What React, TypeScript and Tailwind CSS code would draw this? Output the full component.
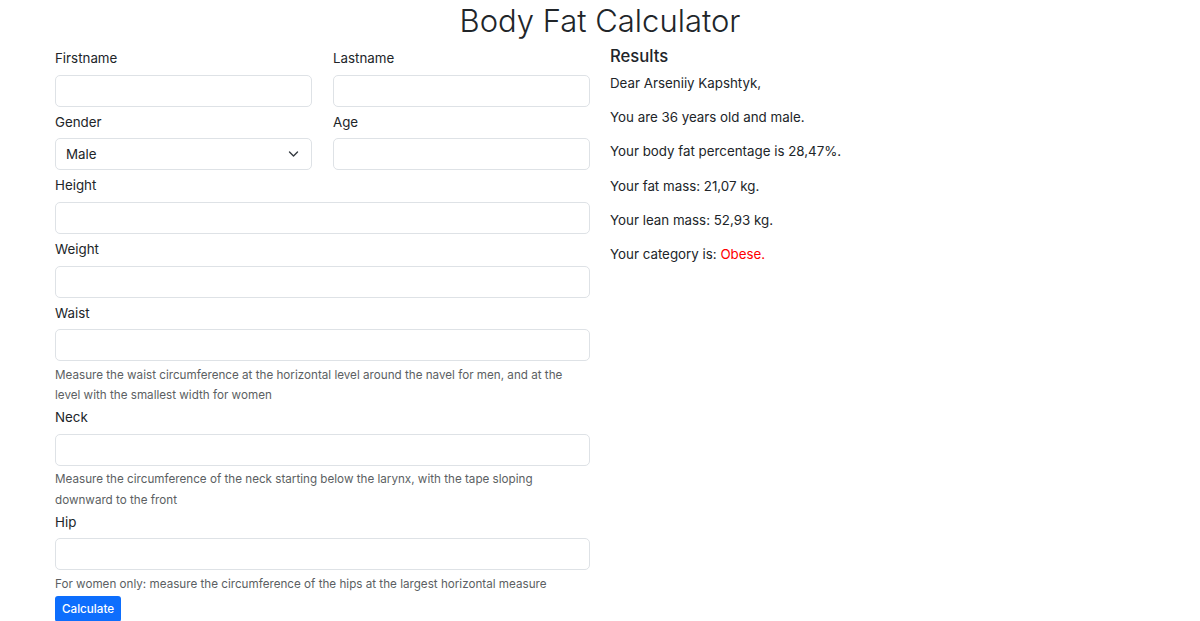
import React, { useState } from 'react';

const inputCls =
  'block w-full h-[32px] rounded-[5px] border border-[#dee2e6] bg-white px-[10px] text-[13.33px] text-[#212529] outline-none';

const Field: React.FC<{ label: string; help?: string; last?: boolean; children?: React.ReactNode }> = ({
  label,
  help,
  last,
  children,
}) => (
  <div className={last ? 'mb-[2px]' : help ? 'mb-[1.5px]' : 'mb-[5px]'}>
    <label className="block mb-[6.67px] leading-[20px]">{label}</label>
    {children ?? <input type="text" className={inputCls} />}
    {help && <div className="mt-[3.33px] text-[11.67px] leading-[20.5px] text-[#5c5f63]">{help}</div>}
  </div>
);

const App: React.FC = () => {
  const [gender, setGender] = useState('Male');

  return (
    <div className="min-h-screen w-full bg-white text-[#212529] text-[13.33px] leading-[20px] font-['Inter','Liberation_Sans',sans-serif]">
      <h1 className="text-center text-[31px] font-light leading-[42px] h-[42px]">Body Fat Calculator</h1>

      <div className="w-[1090px] mx-auto mt-[3px] grid grid-cols-2 gap-[20px]">
        <form className="pt-[3px]" onSubmit={(e) => e.preventDefault()}>
          <div className="grid grid-cols-2 gap-x-[21px]">
            <Field label="Firstname" />
            <Field label="Lastname" />
            <Field label="Gender">
              <div className="relative">
                <select
                  value={gender}
                  onChange={(e) => setGender(e.target.value)}
                  className={inputCls + ' appearance-none pr-[30px]'}
                >
                  <option>Male</option>
                  <option>Female</option>
                </select>
                <svg
                  className="absolute right-[13px] top-[12px] pointer-events-none"
                  width="11"
                  height="8"
                  viewBox="0 0 11 8"
                  fill="none"
                >
                  <path d="M1.5 2l4 4 4-4" stroke="#343a40" strokeWidth="1.4" strokeLinecap="round" strokeLinejoin="round" />
                </svg>
              </div>
            </Field>
            <Field label="Age" />
          </div>
          <Field label="Height" />
          <Field label="Weight" />
          <Field
            label="Waist"
            help="Measure the waist circumference at the horizontal level around the navel for men, and at the level with the smallest width for women"
          />
          <Field
            label="Neck"
            help="Measure the circumference of the neck starting below the larynx, with the tape sloping downward to the front"
          />
          <Field
            label="Hip"
            last
            help="For women only: measure the circumference of the hips at the largest horizontal measure"
          />
          <button
            type="submit"
            className="h-[26px] px-[7px] rounded-[3px] bg-[#0d6efd] text-white text-[11.67px] font-medium leading-[17px]"
          >
            Calculate
          </button>
        </form>

        <div>
          <h5 className="text-[16.67px] font-medium leading-[20px] mt-[1px] mb-[7px]">Results</h5>
          <p className="mb-[14.2px]">Dear Arseniiy Kapshtyk,</p>
          <p className="mb-[14.2px]">You are 36 years old and male.</p>
          <p className="mb-[14.2px]">Your body fat percentage is 28,47%.</p>
          <p className="mb-[14.2px]">Your fat mass: 21,07 kg.</p>
          <p className="mb-[14.2px]">Your lean mass: 52,93 kg.</p>
          <p className="mb-[14.2px]">
            Your category is: <span className="text-[#ff0000]">Obese.</span>
          </p>
        </div>
      </div>
    </div>
  );
};

export default App;
